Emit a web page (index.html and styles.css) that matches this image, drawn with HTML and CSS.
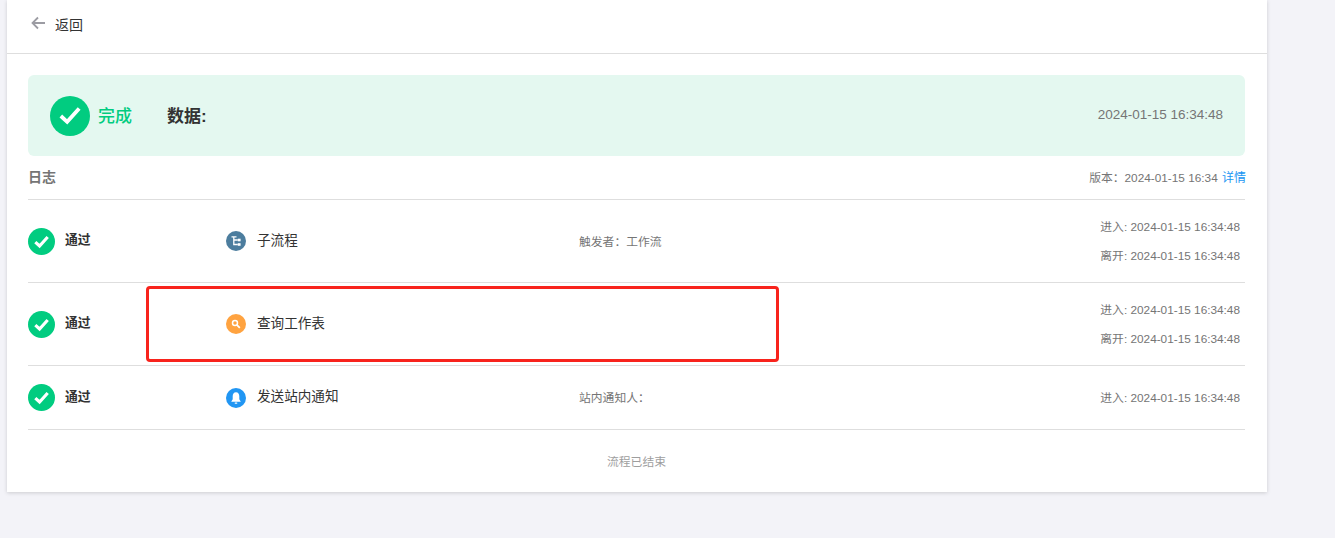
FILE: index.html
```html
<!DOCTYPE html>
<html lang="zh">
<head>
<meta charset="utf-8">
<title>流程详情</title>
<link rel="stylesheet" href="styles.css">
</head>
<body>
<main class="card">
  <header class="topbar">
    <svg class="back-icon" viewBox="0 0 16 14" width="16" height="14"><path d="M15 7H2.500M8 1.500 2.500 7 8 12.500" fill="none" stroke="#9c9ca3" stroke-width="1.800"/></svg>
    <span class="back-text">返回</span>
  </header>
  <div class="content">
    <section class="banner">
      <span class="check check-lg"><svg viewBox="0 0 24 24"><path d="M6.500 12 10.300 15.500 17.500 7.500" fill="none" stroke="#fff" stroke-width="2.300"/></svg></span>
      <span class="status">完成</span>
      <span class="data-label">数据:</span>
      <span class="banner-time">2024-01-15 16:34:48</span>
    </section>
    <div class="log-head">
      <span class="log-title">日志</span>
      <span class="version">版本：2024-01-15 16:34 <a class="detail">详情</a></span>
    </div>
    <div class="row row-tall">
      <div class="col-status"><span class="check"><svg viewBox="0 0 24 24"><path d="M6.500 12.500 10.300 16 17.500 8" fill="none" stroke="#fff" stroke-width="2.800"/></svg></span><span class="pass">通过</span></div>
      <div class="col-node"><span class="node node-blue"><svg viewBox="0 0 20 20"><path d="M5.500 5.800h5M7.800 5.800v7.700h4M7.800 9h4" fill="none" stroke="#fff" stroke-width="1.300"/><rect x="11.800" y="7.700" width="2.800" height="2.600" fill="#fff"/><rect x="11.800" y="12.200" width="2.800" height="2.600" fill="#fff"/></svg></span><span class="node-name">子流程</span></div>
      <div class="col-meta">触发者：工作流</div>
      <div class="col-times"><span>进入: 2024-01-15 16:34:48</span><span>离开: 2024-01-15 16:34:48</span></div>
    </div>
    <div class="row row-tall">
      <div class="col-status"><span class="check"><svg viewBox="0 0 24 24"><path d="M6.500 12.500 10.300 16 17.500 8" fill="none" stroke="#fff" stroke-width="2.800"/></svg></span><span class="pass">通过</span></div>
      <div class="col-node"><span class="node node-orange"><svg viewBox="0 0 20 20"><circle cx="9" cy="9" r="2.500" fill="none" stroke="#fff" stroke-width="1.500"/><path d="m10.800 10.800 3 3" stroke="#fff" stroke-width="1.800"/></svg></span><span class="node-name">查询工作表</span></div>
      <div class="col-meta"></div>
      <div class="col-times"><span>进入: 2024-01-15 16:34:48</span><span>离开: 2024-01-15 16:34:48</span></div>
    </div>
    <div class="row row-short">
      <div class="col-status"><span class="check"><svg viewBox="0 0 24 24"><path d="M6.500 12.500 10.300 16 17.500 8" fill="none" stroke="#fff" stroke-width="2.800"/></svg></span><span class="pass">通过</span></div>
      <div class="col-node"><span class="node node-sky"><svg viewBox="0 0 20 20"><path d="M10 4.300c-2.300 0-3.300 1.800-3.300 4v3L5.200 13.800h9.600l-1.500-2.500v-3c0-2.200-1-4-3.300-4Z" fill="#fff"/><rect x="8.600" y="14.400" width="2.800" height="1.400" rx=".7" fill="#fff"/></svg></span><span class="node-name">发送站内通知</span></div>
      <div class="col-meta">站内通知人：</div>
      <div class="col-times"><span>进入: 2024-01-15 16:34:48</span></div>
    </div>
    <p class="end-note">流程已结束</p>
  </div>
</main>
<div class="highlight"></div>
</body>
</html>
```
FILE: styles.css
```css
* { box-sizing: border-box; }
html, body { margin: 0; height: 100%; }
body {
  background: #f3f3f8;
  font-family: "Liberation Sans", "Noto Sans CJK SC", sans-serif;
  overflow: hidden;
  position: relative;
}
.card {
  width: 1260px;
  height: 492px;
  margin-left: 7px;
  background: #fff;
  box-shadow: 0 1px 4px rgba(0, 0, 0, .16);
}
.topbar {
  height: 54px;
  display: flex;
  align-items: center;
  padding: 0 0 4px 23px;
  border-bottom: 1px solid #dedede;
}
.back-icon { margin-top: -3px; }
.back-text { margin-left: 9px; font-size: 14px; color: #333; position: relative; top: -1px; }
.content { padding: 21px 22px 0 21px; }
.banner {
  height: 81px;
  display: flex;
  align-items: center;
  padding: 0 22px;
  background: #e4f8f0;
  border-radius: 6px;
}
.check {
  flex: none;
  width: 27px;
  height: 27px;
  border-radius: 50%;
  background: #01cc80;
  display: flex;
}
.check svg { width: 100%; height: 100%; }
.check-lg { width: 40px; height: 40px; }
.status { margin-left: 8px; font-size: 17px; font-weight: 500; color: #01cc80; width: 69px; position: relative; top: -1px; }
.data-label { font-size: 17px; font-weight: 700; color: #333; position: relative; top: -1px; }
.banner-time { margin-left: auto; font-size: 13.500px; color: #757575; position: relative; top: -1px; }
.log-head {
  height: 44px;
  display: flex;
  align-items: center;
  justify-content: space-between;
  border-bottom: 1px solid #dedede;
}
.log-title { font-size: 14px; font-weight: 700; color: #757575; position: relative; top: -2px; }
.version { font-size: 11.800px; color: #757575; margin-right: -1px; position: relative; top: -1px; }
.detail { color: #2196f3; margin-left: 1px; font-size: 12px; }
.row {
  display: flex;
  align-items: center;
  border-bottom: 1px solid #dedede;
}
.row-tall { height: 83px; }
.row-short { height: 64px; }
.col-status { width: 198px; display: flex; align-items: center; }
.pass { margin-left: 10px; font-size: 12.800px; font-weight: 700; color: #333; position: relative; top: -2.500px; }
.col-node { width: 353px; display: flex; align-items: center; }
.node {
  flex: none;
  width: 20px;
  height: 20px;
  border-radius: 50%;
  display: flex;
}
.node svg { width: 100%; height: 100%; }
.node-blue { background: #4c7d9e; }
.node-orange { background: #ffa340; }
.node-sky { background: #2196f3; }
.node-name { margin-left: 11px; font-size: 13.600px; color: #333; position: relative; top: -2.500px; }
.col-meta { flex: 1; font-size: 11.800px; color: #757575; position: relative; top: -1px; }
.col-times {
  display: flex;
  flex-direction: column;
  gap: 13px;
  align-items: flex-end;
  padding-right: 5px;
  font-size: 11.800px;
  line-height: 16px;
  color: #757575;
}
.end-note { margin: 24px 0 0; text-align: center; font-size: 11.800px; line-height: 16px; color: #9e9e9e; }
.highlight {
  position: absolute;
  left: 146px;
  top: 286px;
  width: 633px;
  height: 76px;
  border: 3px solid #f8231c;
  border-radius: 4px;
}
```
